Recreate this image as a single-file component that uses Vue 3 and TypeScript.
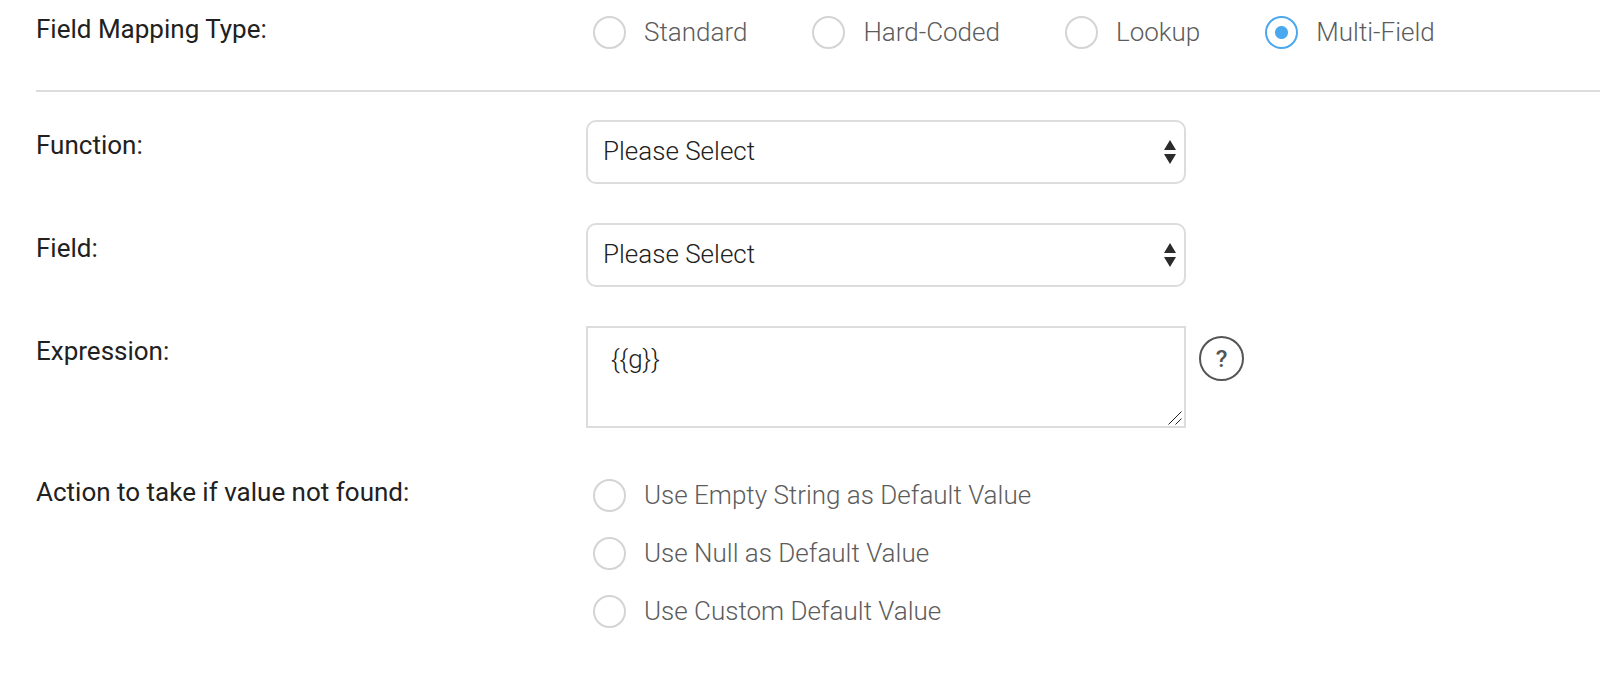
<script setup lang="ts">
import { ref } from 'vue'

interface Option {
  value: string
  label: string
}

const mappingTypes: Option[] = [
  { value: 'standard', label: 'Standard' },
  { value: 'hard-coded', label: 'Hard-Coded' },
  { value: 'lookup', label: 'Lookup' },
  { value: 'multi-field', label: 'Multi-Field' },
]

const fallbackActions: Option[] = [
  { value: 'empty', label: 'Use Empty String as Default Value' },
  { value: 'null', label: 'Use Null as Default Value' },
  { value: 'custom', label: 'Use Custom Default Value' },
]

const selects = [
  { id: 'function', label: 'Function:' },
  { id: 'field', label: 'Field:' },
]

const mappingType = ref('multi-field')
const fallback = ref('')
const expression = ref('{{g}}')
</script>

<template>
  <form class="form" @submit.prevent>
    <div class="row row-type" role="radiogroup" aria-labelledby="type-label">
      <span id="type-label" class="label">Field Mapping Type:</span>
      <div class="options options-inline">
        <label v-for="o in mappingTypes" :key="o.value" class="option">
          <input v-model="mappingType" class="radio" type="radio" name="type" :value="o.value" />
          <span>{{ o.label }}</span>
        </label>
      </div>
    </div>

    <hr class="divider" />

    <div class="fields">
      <div v-for="s in selects" :key="s.id" class="row">
        <label class="label label-field" :for="s.id">{{ s.label }}</label>
        <div class="control">
          <select :id="s.id" class="select">
            <option>Please Select</option>
          </select>
          <svg class="arrows" viewBox="0 0 12 24" aria-hidden="true">
            <path d="M6 0L12 10H0ZM0 14H12L6 24Z" />
          </svg>
        </div>
      </div>

      <div class="row">
        <label class="label label-field" for="expression">Expression:</label>
        <div class="with-help">
          <div class="control">
            <textarea id="expression" v-model="expression" class="textarea"></textarea>
            <svg class="grip" viewBox="0 0 14 14" aria-hidden="true">
              <path d="M0.5 13.5L13.5 0.5M7.5 13.5L13.5 7.5" />
            </svg>
          </div>
          <button class="help" type="button" aria-label="Expression help">?</button>
        </div>
      </div>

      <div class="row row-action" role="radiogroup" aria-labelledby="action-label">
        <span id="action-label" class="label">Action to take if value not found:</span>
        <div class="options options-stacked">
          <label v-for="o in fallbackActions" :key="o.value" class="option">
            <input v-model="fallback" class="radio" type="radio" name="fallback" :value="o.value" />
            <span>{{ o.label }}</span>
          </label>
        </div>
      </div>
    </div>
  </form>
</template>

<style>
body {
  margin: 0;
  background: #fff;
}
</style>

<style scoped>
.form {
  padding: 12px 0 40px 36px;
  font-family: Roboto, "Liberation Sans", sans-serif;
  font-size: 26px;
  line-height: 34px;
  color: #212121;
}

.row {
  display: grid;
  grid-template-columns: minmax(200px, 550px) minmax(0, 1fr);
  align-items: start;
}

.label-field {
  padding-top: 8px;
}

.options {
  display: flex;
  padding: 3px 0 0 7px;
  font-weight: 300;
  color: #5c5c5c;
}

.options-inline {
  flex-wrap: wrap;
  gap: 24px 65px;
}

.options-stacked {
  flex-direction: column;
  align-items: flex-start;
  gap: 24px;
}

.option {
  display: flex;
  align-items: center;
  gap: 18px;
}

.radio {
  appearance: none;
  box-sizing: border-box;
  flex: none;
  width: 33px;
  height: 33px;
  margin: 0;
  border: 2px solid #d4d4d4;
  border-radius: 50%;
  background: #fff;
}

.radio:checked {
  border-color: #4aa8ee;
  background: radial-gradient(circle, #4aa8ee 6px, #fff 7px);
}

.divider {
  height: 2px;
  margin: 41px 0 28px;
  border: 0;
  background: #dcdcdc;
}

.fields {
  display: flex;
  flex-direction: column;
  gap: 39px;
}

.control {
  position: relative;
  width: 100%;
  max-width: 600px;
}

.select,
.textarea {
  display: block;
  box-sizing: border-box;
  width: 100%;
  margin: 0;
  border: 2px solid #dcdcdc;
  background: #fff;
  font: inherit;
  font-weight: 300;
  color: #212121;
}

.select {
  appearance: none;
  height: 64px;
  padding: 0 40px 2px 15px;
  border-radius: 10px;
}

.textarea {
  height: 102px;
  padding: 14px 23px;
  border-radius: 0;
  resize: none;
}

.arrows {
  position: absolute;
  top: 20px;
  right: 10px;
  width: 12px;
  height: 24px;
  fill: #2b2b2b;
  pointer-events: none;
}

.grip {
  position: absolute;
  right: 4px;
  bottom: 3px;
  width: 14px;
  height: 14px;
  fill: none;
  stroke: #222;
  pointer-events: none;
}

.with-help {
  display: flex;
  align-items: flex-start;
  gap: 13px;
}

.help {
  box-sizing: border-box;
  flex: none;
  width: 45px;
  height: 45px;
  margin: 10px 16px 0 0;
  padding: 0;
  border: 2px solid #555;
  border-radius: 50%;
  background: #fff;
  font: inherit;
  font-size: 24px;
  font-weight: 500;
  color: #555;
}

.row-action {
  padding-top: 8px;
}
</style>
